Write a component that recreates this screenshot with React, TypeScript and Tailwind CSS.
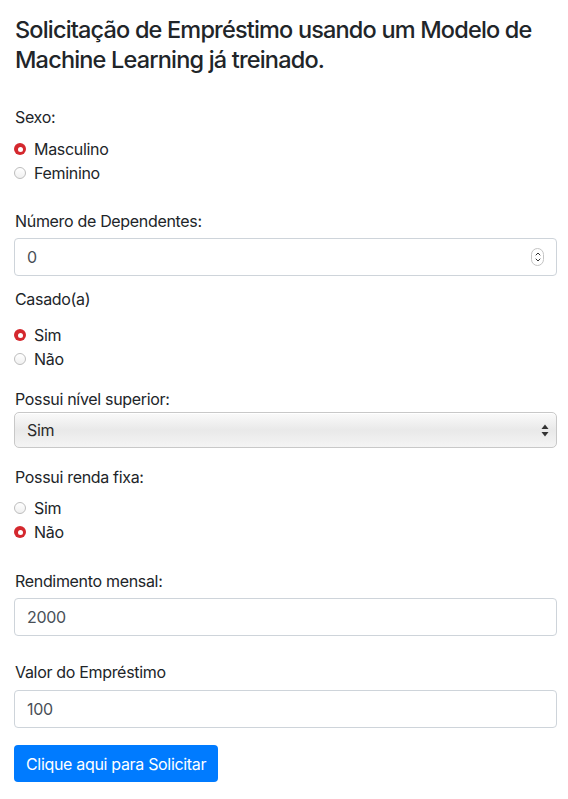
import { ChevronDown, ChevronUp } from 'lucide-react';

const FONT = "font-['Inter','Liberation_Sans',sans-serif]";

function Radio({ label, checked, className = '' }: { label: string; checked?: boolean; className?: string }) {
  return (
    <div className={`flex items-center h-6 leading-6 ${className}`}>
      {checked ? (
        <span className="w-3 h-3 rounded-full bg-[#d4282e] flex items-center justify-center ml-[14px]">
          <span className="w-[5px] h-[5px] rounded-full bg-white" />
        </span>
      ) : (
        <span className="w-3 h-3 rounded-full border border-[#bdbdbd] bg-gradient-to-b from-white to-[#f0f0f0] ml-[14px]" />
      )}
      <span className="ml-2">{label}</span>
    </div>
  );
}

function Label({ children, className = '' }: { children: React.ReactNode; className?: string }) {
  return <div className={`h-6 leading-6 ${className}`}>{children}</div>;
}

function TextInput({ value, spinner, className = '' }: { value: string; spinner?: boolean; className?: string }) {
  return (
    <div
      className={`h-[38px] border border-[#ced4da] rounded-[4px] flex items-center px-3 text-[#495057] bg-white ${className}`}
    >
      <span className="flex-1">{value}</span>
      {spinner && (
        <span className="w-[13px] h-[18px] rounded-full border border-[#c4c4c4] flex flex-col items-center justify-center text-[#333]">
          <ChevronUp size={8} strokeWidth={3} className="-mb-[1px]" />
          <ChevronDown size={8} strokeWidth={3} className="-mt-[1px]" />
        </span>
      )}
    </div>
  );
}

export default function App() {
  return (
    <div className={`${FONT} text-[16px] tracking-[-0.02em] text-[#212529] bg-white min-h-[799px] pl-[14px] pr-[11px]`}>
      <h4 className="pt-[15px] pl-[1px] text-[23.5px] tracking-[-0.035em] leading-[30px] font-medium">
        Solicitação de Empréstimo usando um Modelo de Machine Learning já treinado.
      </h4>

      <Label className="mt-[30px] pl-[1px]">Sexo:</Label>
      <Radio label="Masculino" checked className="mt-2 -ml-[14px]" />
      <Radio label="Feminino" className="-ml-[14px]" />

      <Label className="mt-6 pl-[1px]">Número de Dependentes:</Label>
      <TextInput value="0" spinner className="mt-[5px]" />

      <Label className="mt-[11px] pl-[1px]">Casado(a)</Label>
      <Radio label="Sim" checked className="mt-3 -ml-[14px]" />
      <Radio label="Não" className="-ml-[14px]" />

      <Label className="mt-4 pl-[1px]">Possui nível superior:</Label>
      <div className="mt-[1px] h-[36px] rounded-[5px] border border-[#c8c8c8] bg-gradient-to-b from-[#fafafa] via-[#e9e9e9] to-[#f4f4f4] flex items-center pl-[12px] pr-[7px] text-[#2b2b2b] shadow-[inset_0_1px_0_#ffffff]">
        <span className="flex-1">Sim</span>
        <svg width="8" height="13" viewBox="0 0 8 13" className="text-[#333]">
          <path d="M4 0.5 L7.5 5 L0.5 5 Z" fill="currentColor" />
          <path d="M4 12.5 L7.5 8 L0.5 8 Z" fill="currentColor" />
        </svg>
      </div>

      <Label className="mt-[17px] pl-[1px]">Possui renda fixa:</Label>
      <Radio label="Sim" className="mt-[7px] -ml-[14px]" />
      <Radio label="Não" checked className="-ml-[14px]" />

      <Label className="mt-[25px] pl-[1px]">Rendimento mensal:</Label>
      <TextInput value="2000" className="mt-[5px]" />

      <Label className="mt-6 pl-[1px]">Valor do Empréstimo</Label>
      <TextInput value="100" className="mt-[6px]" />

      <button className="mt-[17px] h-[37px] px-3 rounded-[4px] bg-[#007bff] text-white leading-6">
        Clique aqui para Solicitar
      </button>
    </div>
  );
}
